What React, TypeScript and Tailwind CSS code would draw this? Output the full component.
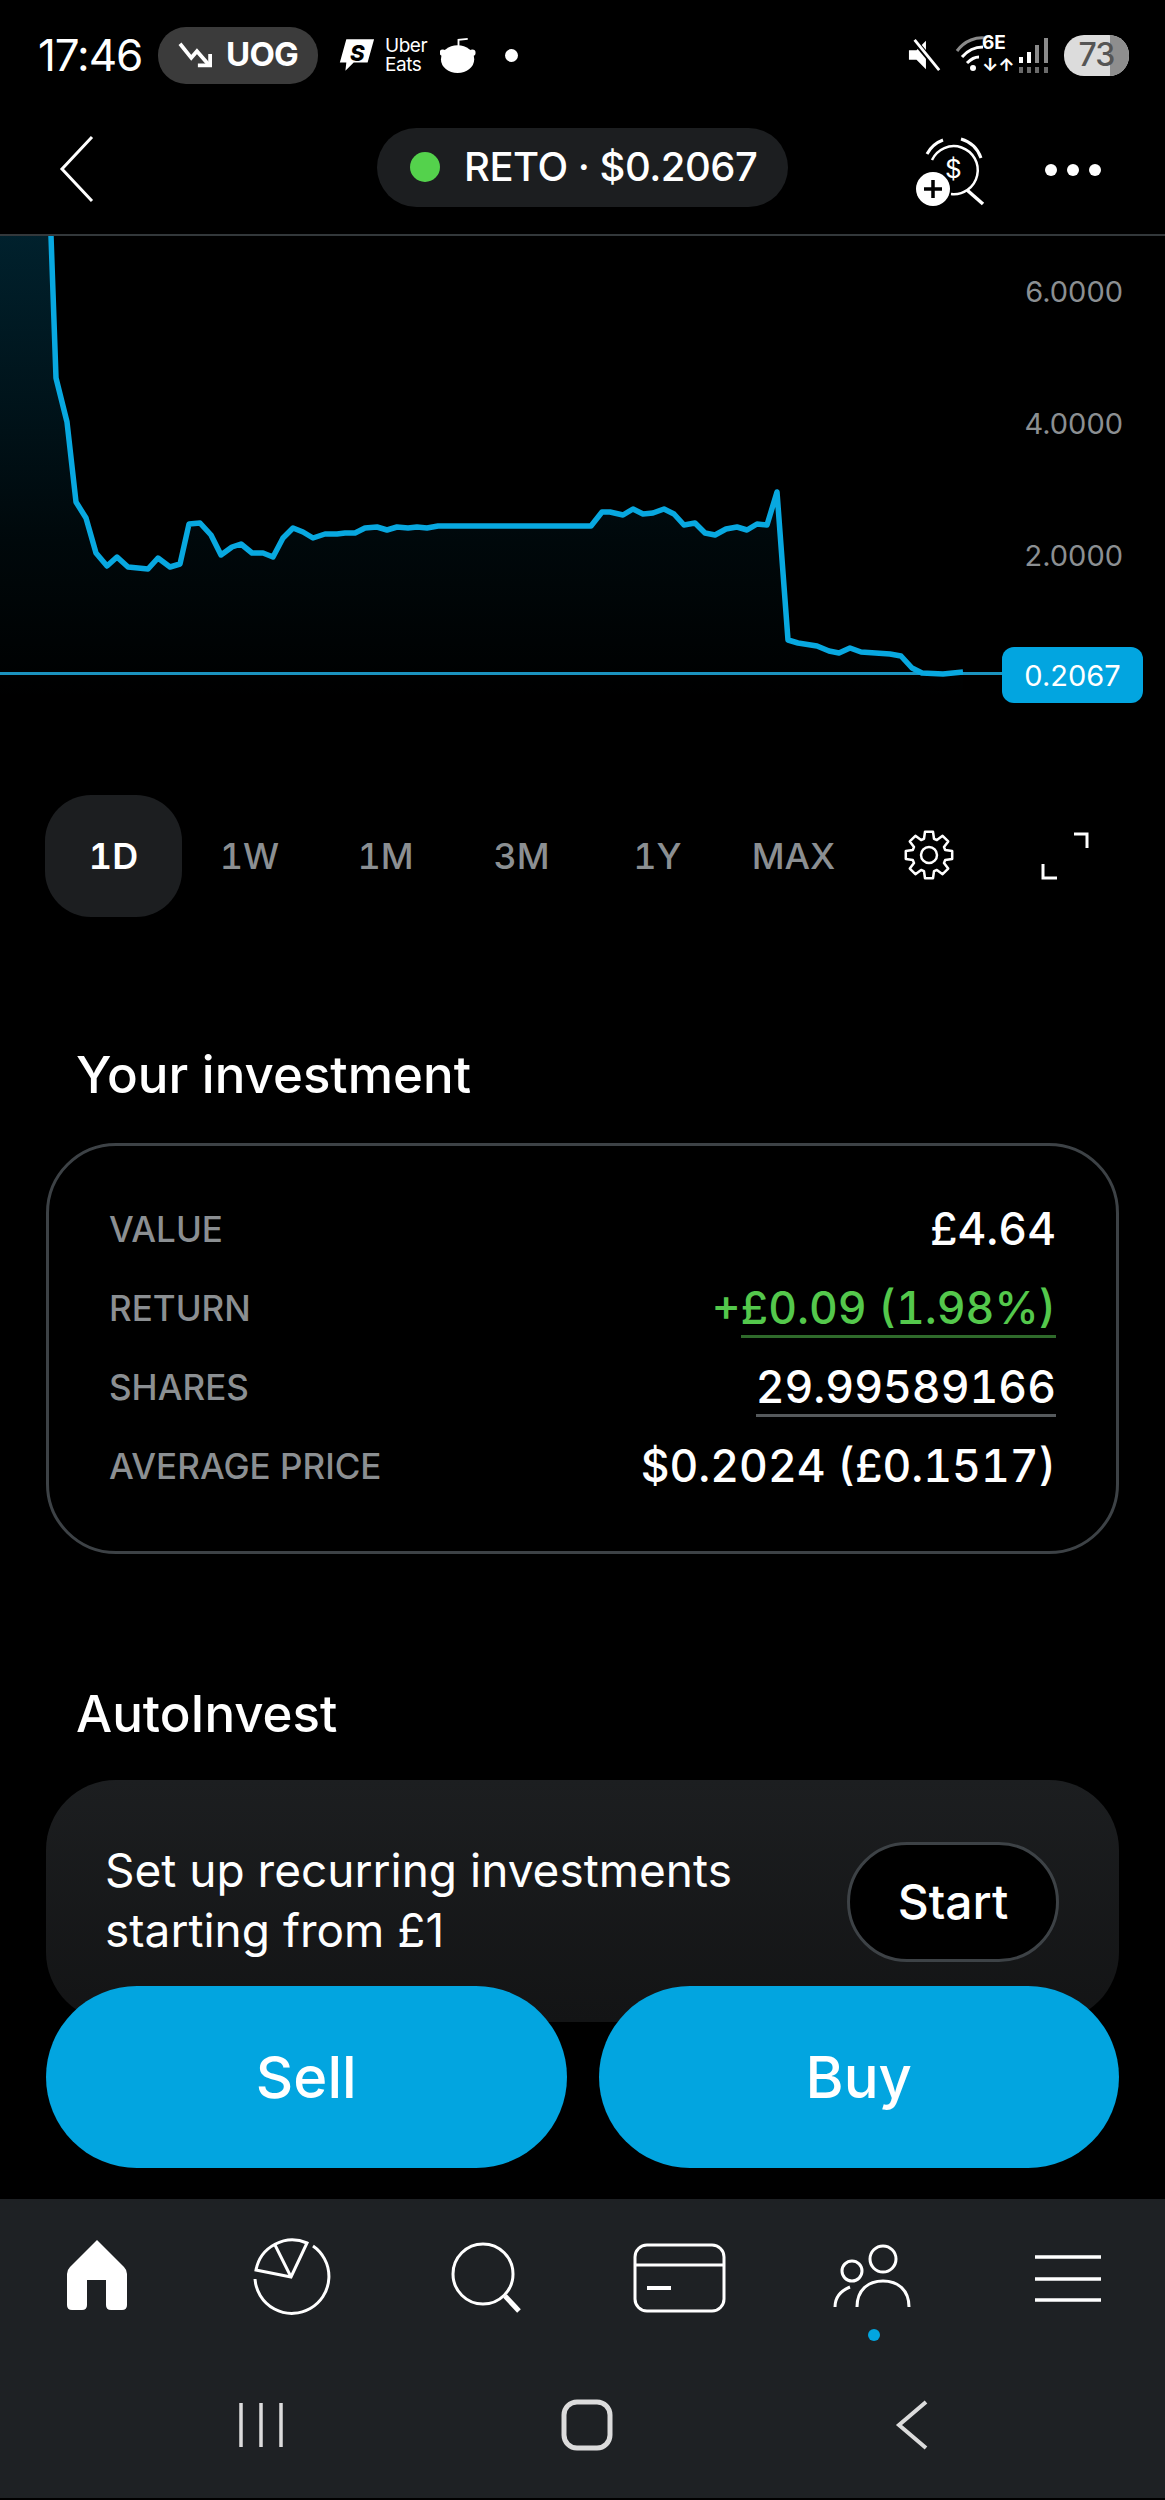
const CHART_POINTS =
  '51,236 56,378 67,422 76,502 86,518 96,553 107,566 117,557 128,567 148,569 158,558 170,567 180,564 189,524 200,523 211,535 221,555 232,547 241,544 252,553 263,553 273,557 283,538 293,528 303,532 313,538 325,534 337,534 345,533 355,533 365,528 377,527 387,530 397,527 408,528 417,527 427,528 438,526 591,526 602,512 610,512 623,515 633,509 643,514 653,513 664,509 674,514 684,525 695,523 705,533 715,535 726,529 737,527 747,530 757,524 767,525 777,492 788,640 798,643 817,646 829,651 839,653 850,648 861,652 890,654 901,656 912,668 922,673 943,674 963,672';

const RANGES = ['1D', '1W', '1M', '3M', '1Y', 'MAX'];

// 8 tooth cog outline, centred on 26,26
function gearPath() {
  const pts: string[] = [];
  for (let i = 0; i < 8; i++) {
    const a = (i * Math.PI) / 4;
    const steps: [number, number][] = [
      [17, -0.3],
      [23.5, -0.17],
      [23.5, 0.17],
      [17, 0.3],
    ];
    steps.forEach(([r, d]) => {
      const x = 26 + r * Math.sin(a + d);
      const y = 26 - r * Math.cos(a + d);
      pts.push(`${x.toFixed(1)},${y.toFixed(1)}`);
    });
  }
  return pts.join(' ');
}

function StatusBar() {
  return (
    <div className="flex h-[110px] items-center pl-[38px] pr-[36px] text-white">
      <span className="w-[112px] text-[44px] font-normal tracking-tight">17:46</span>
      <div className="ml-[8px] flex h-[57px] w-[160px] items-center justify-center gap-[12px] rounded-[28px] bg-[#3b3b3b]">
        <svg width="36" height="32" viewBox="0 0 38 34" fill="none" stroke="white" strokeWidth="4">
          <path d="M2 5 L14 20 L20 13 L33 28" />
          <path d="M21 28 H34 V16" />
        </svg>
        <span className="text-[33px] font-bold tracking-tight">UOG</span>
      </div>
      <svg className="ml-[20px]" width="37" height="34" viewBox="0 0 40 36">
        <path d="M9 1 H39 L32 26 H17 L8 35 L9 26 H2 Z" fill="white" />
        <text x="13" y="24" fontSize="24" fontWeight="800" fontStyle="italic" fill="black">S</text>
      </svg>
      <div className="ml-[10px] flex w-[44px] flex-col text-[19px] leading-[19px] tracking-tight">
        <span>Uber</span>
        <span>Eats</span>
      </div>
      <svg className="ml-[11px]" width="37" height="36" viewBox="0 0 40 39" fill="white">
        <ellipse cx="19" cy="24" rx="18" ry="15" />
        <circle cx="3" cy="17" r="3.5" />
        <circle cx="35" cy="17" r="3.5" />
        <path d="M20 12 V3 L30 2" stroke="white" strokeWidth="2" fill="none" />
      </svg>
      <div className="ml-[28px] h-[13px] w-[13px] rounded-full bg-white" />

      <div className="ml-auto flex items-center">
        <svg width="34" height="34" viewBox="0 0 36 36" fill="white">
          <path d="M1 13 H9 L19 3 V33 L9 23 H1 Z" />
          <path d="M6 2 L33 34" stroke="black" strokeWidth="6" />
          <path d="M7 2 L33 34" stroke="white" strokeWidth="3" />
        </svg>
        <div className="relative ml-[13px] h-[40px] w-[52px]">
          <svg width="34" height="40" viewBox="0 0 34 40" fill="none" stroke="white" strokeWidth="3">
            <path d="M2 16 C10 5 22 2 30 3" stroke="#8a8a8a" />
            <path d="M7 22 C13 15 20 12 28 12" />
            <path d="M12 28 C16 24 19 22 24 22" />
            <circle cx="18" cy="33" r="3" fill="white" stroke="none" />
          </svg>
          <span className="absolute left-[27px] top-[-3px] text-[19px] font-bold leading-[22px]">6E</span>
          <span className="absolute left-[27px] top-[20px] text-[18px] font-bold leading-[20px]">↓↑</span>
        </div>
        <svg className="ml-[11px]" width="32" height="36" viewBox="0 0 32 36">
          <rect x="1" y="20" width="4" height="6" fill="white" />
          <rect x="9" y="15" width="4" height="11" fill="white" />
          <rect x="17" y="8" width="4" height="18" fill="#8a8a8a" />
          <rect x="26" y="1" width="4" height="25" fill="#8a8a8a" />
          <path d="M1 30 h4 v6 h-4 Z M9 30 h4 v6 h-4 Z M17 30 h4 v6 h-4 Z M26 30 h4 v6 h-4 Z" fill="#6a6a6a" />
        </svg>
        <div className="relative ml-[14px] flex h-[41px] w-[65px] items-center justify-center overflow-hidden rounded-[20px] bg-[#dcdcdc]">
          <div className="absolute right-0 top-0 h-full w-[19px] bg-[#8e8e8e]" />
          <span className="relative text-[32px] font-medium leading-none tracking-tight text-[#555]">73</span>
        </div>
      </div>
    </div>
  );
}

function Header() {
  return (
    <div className="relative flex h-[126px] items-center justify-center border-b-2 border-[#33383b] pb-[10px]">
      <svg className="absolute left-[59px] top-[25px]" width="36" height="68" viewBox="0 0 36 68" fill="none" stroke="white" strokeWidth="3">
        <path d="M33 2 L3 34 L33 66" />
      </svg>
      <div className="flex h-[79px] w-[411px] items-center rounded-[40px] bg-[#1c1e20] pl-[33px]">
        <div className="h-[30px] w-[30px] rounded-full bg-[#54d24c]" />
        <span className="ml-[24px] text-[40px] font-medium leading-none tracking-[-0.5px] text-white">RETO · $0.2067</span>
      </div>
      <svg className="absolute left-[915px] top-[26px]" width="72" height="72" viewBox="0 0 72 72" fill="none" stroke="white" strokeWidth="3">
        <path d="M12 18 A30 30 0 0 1 28 4" />
        <path d="M46 3 A30 30 0 0 1 66 22" />
        <path d="M17 24 A24 24 0 1 1 36 58" strokeWidth="2.5" />
        <path d="M52 54 L68 68" strokeWidth="3.5" />
        <text x="30" y="42" fontSize="26" fill="white" stroke="none" fontFamily="Inter, sans-serif">$</text>
        <circle cx="18" cy="53" r="17" fill="white" stroke="none" />
        <path d="M18 44 V62 M9 53 H27" stroke="black" strokeWidth="3.5" />
      </svg>
      <div className="absolute left-[1045px] top-[54px] flex gap-[10px]">
        <div className="h-[12px] w-[12px] rounded-full bg-white" />
        <div className="h-[12px] w-[12px] rounded-full bg-white" />
        <div className="h-[12px] w-[12px] rounded-full bg-white" />
      </div>
    </div>
  );
}

function Chart() {
  return (
    <div className="relative h-[559px]">
      <svg className="block h-full w-full" viewBox="0 236 1165 559" fill="none">
        <defs>
          <linearGradient id="fade" x1="0" y1="236" x2="0" y2="700" gradientUnits="userSpaceOnUse">
            <stop offset="0" stopColor="#02a5e0" stopOpacity="0.2" />
            <stop offset="0.65" stopColor="#02a5e0" stopOpacity="0.05" />
            <stop offset="1" stopColor="#02a5e0" stopOpacity="0" />
          </linearGradient>
        </defs>
        <polygon points={`0,236 ${CHART_POINTS} 963,700 0,700`} fill="url(#fade)" />
        <line x1="0" y1="673.5" x2="1010" y2="673.5" stroke="#1b93bf" strokeWidth="3" />
        <polyline points={CHART_POINTS} stroke="#08a8e0" strokeWidth="5.5" strokeLinejoin="round" />
      </svg>
      <span className="absolute right-[42px] top-[38px] text-[29px] leading-[36px] text-[#8b8f92]">6.0000</span>
      <span className="absolute right-[42px] top-[170px] text-[29px] leading-[36px] text-[#8b8f92]">4.0000</span>
      <span className="absolute right-[42px] top-[302px] text-[29px] leading-[36px] text-[#8b8f92]">2.0000</span>
      <div className="absolute left-[1002px] top-[411px] flex h-[56px] w-[141px] items-center justify-center rounded-[12px] bg-[#02a5e0] pt-[1px] text-[29px] text-white">
        0.2067
      </div>
    </div>
  );
}

function RangeRow() {
  return (
    <div className="grid h-[122px] grid-cols-[repeat(8,136px)] px-[45px] tabular-nums">
      {RANGES.map((range, i) => (
        <div
          key={range}
          className={
            i === 0
              ? 'flex h-[122px] w-[137px] items-center justify-center rounded-[46px] bg-[#1c1e20] text-[36px] font-semibold text-white'
              : 'flex h-[122px] w-[137px] items-center justify-center text-[36px] font-medium text-[#8b8f92]'
          }
        >
          {range}
        </div>
      ))}
      <div className="flex items-center justify-center pb-[2px]">
        <svg width="52" height="52" viewBox="0 0 52 52" fill="none" stroke="white" strokeWidth="2.5" strokeLinejoin="round">
          <polygon points={gearPath()} />
          <circle cx="26" cy="26" r="8" />
        </svg>
      </div>
      <div className="flex items-center justify-center">
        <svg width="50" height="50" viewBox="0 0 50 50" fill="none" stroke="white" strokeWidth="3">
          <path d="M34 3 H47 V17" />
          <path d="M3 33 V47 H17" />
        </svg>
      </div>
    </div>
  );
}

function InvestRow({ label, children }: { label: string; children: React.ReactNode }) {
  return (
    <div className="flex h-[79px] items-center justify-between">
      <span className="text-[35px] font-medium text-[#8b8f92]">{label}</span>
      <span className="text-[44.5px] font-medium tabular-nums text-white">{children}</span>
    </div>
  );
}

function Investment() {
  return (
    <div className="px-[46px]">
      <h2 className="mt-[128px] pl-[30px] text-[51px] font-medium leading-[60px] text-white">Your investment</h2>
      <div className="mt-[38px] h-[411px] rounded-[70px] border-[3px] border-[#3d4246] px-[60px] pt-[44px]">
        <InvestRow label="VALUE">£4.64</InvestRow>
        <InvestRow label="RETURN">
          <span className="text-[#54c84c]">
            +<span className="border-b-[3px] border-[#2f6a2b]">£0.09 (1.98%)</span>
          </span>
        </InvestRow>
        <InvestRow label="SHARES">
          <span className="border-b-[3px] border-[#55595c]">29.99589166</span>
        </InvestRow>
        <InvestRow label="AVERAGE PRICE">$0.2024 (£0.1517)</InvestRow>
      </div>
    </div>
  );
}

function AutoInvest() {
  return (
    <div className="px-[46px]">
      <h2 className="mt-[130px] pl-[30px] text-[51px] font-medium leading-[60px] text-white">AutoInvest</h2>
      <div className="mt-[36px] flex h-[242px] items-start justify-between rounded-[70px] bg-gradient-to-b from-[#1c1e20] to-[#131415] pl-[59px] pr-[60px] pt-[60px]">
        <p className="text-[46px] font-normal leading-[60px] text-white">
          Set up recurring investments
          <br />
          starting from £1
        </p>
        <div className="mt-[2px] flex h-[120px] w-[212px] items-center justify-center rounded-[60px] border-[3px] border-[#3d4246] bg-black text-[48px] font-medium text-white">
          Start
        </div>
      </div>
    </div>
  );
}

function TabBar() {
  return (
    <div className="h-[198px] shrink-0">
      <svg className="block h-full w-full" viewBox="0 2199 1165 198" fill="none" stroke="white" strokeWidth="3">
        <path
          fillRule="evenodd"
          fill="white"
          stroke="none"
          d="M97 2240 L124 2267 Q127 2270 127 2274 V2305 Q127 2310 122 2310 H111 Q106 2310 106 2305 V2280 H87 V2305 Q87 2310 82 2310 H72 Q67 2310 67 2305 V2274 Q67 2270 70 2267 Z"
        />

        <path d="M313 2246 A37 37 0 1 1 255 2279" />
        <path d="M291 2277 L256 2270 A37 37 0 0 1 307 2243 Z" />
        <path d="M275 2245 L291 2277" />

        <circle cx="483" cy="2274" r="30" />
        <path d="M505 2296 L519 2311" strokeWidth="5" />

        <rect x="635" y="2245" width="89" height="66" rx="12" />
        <path d="M635 2265 H724" />
        <path d="M647 2288 H671" strokeWidth="4" />

        <circle cx="883" cy="2259" r="13" />
        <circle cx="852" cy="2271" r="10" />
        <path d="M857 2307 C857 2290 868 2281 883 2281 C898 2281 909 2290 909 2307" />
        <path d="M835 2307 C835 2297 840 2291 850 2287" />

        <path d="M1035 2257 H1101 M1035 2279 H1101 M1035 2300 H1101" strokeWidth="3.5" />
        <circle cx="874" cy="2335" r="6" fill="#02a5e0" stroke="none" />
      </svg>
    </div>
  );
}

function SystemNav() {
  return (
    <div className="h-[103px] shrink-0 border-b-2 border-black">
      <svg className="block h-full w-full" viewBox="0 2397 1165 101" fill="none" stroke="#dcdcdc" strokeWidth="3.5">
        <path d="M241 2403 V2447 M261 2403 V2447 M281 2403 V2447" />
        <rect x="564" y="2402" width="46" height="46" rx="13" strokeWidth="5" />
        <path d="M926 2402 L899 2425 L926 2448" strokeWidth="4" />
      </svg>
    </div>
  );
}

export default function App() {
  return (
    <div className="flex h-[2500px] w-[1165px] flex-col overflow-hidden bg-black font-['Inter',sans-serif]">
      <StatusBar />
      <Header />
      <div className="relative min-h-0 flex-1 overflow-hidden">
        <Chart />
        <RangeRow />
        <Investment />
        <AutoInvest />
        <div className="absolute bottom-[31px] left-[46px] right-[46px] grid grid-cols-2 gap-[32px]">
          <div className="flex h-[182px] items-center justify-center rounded-[91px] bg-[#02a5e0] text-[58px] font-medium text-white">
            Sell
          </div>
          <div className="flex h-[182px] items-center justify-center rounded-[91px] bg-[#02a5e0] text-[58px] font-medium text-white">
            Buy
          </div>
        </div>
      </div>
      <div className="shrink-0 bg-[#1e2124]">
        <TabBar />
        <SystemNav />
      </div>
    </div>
  );
}
